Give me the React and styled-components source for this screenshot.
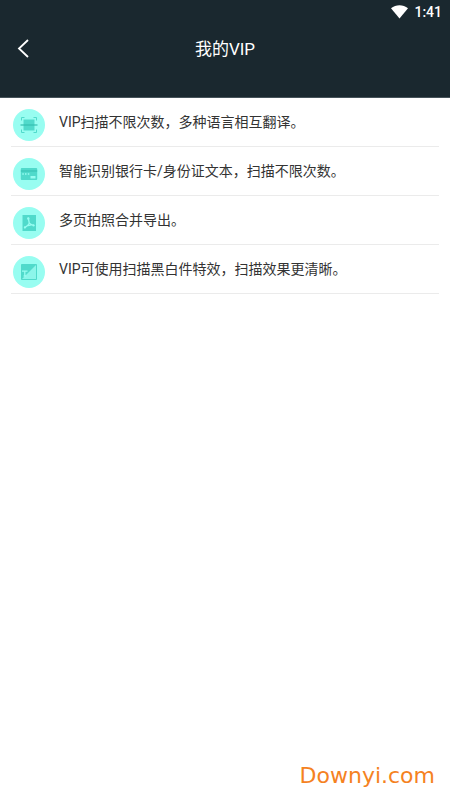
import React from 'react';
import styled, { createGlobalStyle } from 'styled-components';

const COLORS = {
  header: '#1a282f',
  circle: '#98fdf1',
  glyph: '#50dacb',
  glyphDark: '#35bfb1',
  text: '#333',
  line: '#ebebeb',
  brand: '#f5821f',
};

const GlobalStyle = createGlobalStyle`
  * {
    box-sizing: border-box;
  }
  body {
    margin: 0;
    background: #fff;
    font-family: Roboto, 'Noto Sans CJK SC', sans-serif;
  }
`;

const Page = styled.div`
  display: flex;
  flex-direction: column;
  min-height: 100vh;
`;

const Header = styled.header`
  background: ${COLORS.header};
  color: #fff;
  padding-bottom: 24px;
  border-bottom: 1px solid #46535a;
`;

const StatusBar = styled.div`
  display: flex;
  align-items: center;
  justify-content: flex-end;
  gap: 6px;
  height: 24px;
  padding-right: 8px;
`;

const Clock = styled.time`
  font-size: 14px;
  line-height: 24px;
  font-weight: 500;
`;

const TitleBar = styled.div`
  display: grid;
  grid-template-columns: 48px 1fr 48px;
  align-items: center;
  height: 49px;
`;

const BackButton = styled.button`
  display: flex;
  align-items: center;
  height: 48px;
  padding: 0 0 0 16px;
  border: 0;
  background: none;
  color: inherit;
  cursor: pointer;
`;

const Title = styled.h1`
  margin: 0;
  font-size: 17px;
  line-height: 24px;
  font-weight: 400;
  text-align: center;
`;

const List = styled.ul`
  flex: 1;
  margin: 0;
  padding: 0 11px;
  list-style: none;
`;

const Item = styled.li`
  display: flex;
  gap: 14px;
  height: 49px;
  padding: 11px 0 0 2px;
  border-bottom: 1px solid ${COLORS.line};
`;

const Circle = styled.span`
  display: flex;
  flex: none;
  align-items: center;
  justify-content: center;
  width: 32px;
  height: 32px;
  border-radius: 50%;
  background: ${COLORS.circle};
`;

const Label = styled.span`
  font-size: 14px;
  line-height: 26px;
  color: ${COLORS.text};
`;

const Footer = styled.footer`
  display: flex;
  justify-content: flex-end;
  padding: 0 15px 10px;
`;

const Brand = styled.a`
  font-family: 'DejaVu Sans', sans-serif;
  font-size: 22px;
  line-height: 28px;
  color: ${COLORS.brand};
  text-decoration: none;
`;

function Glyph({ children }) {
  return (
    <svg width="18" height="18" viewBox="0 0 18 18" fill="none" aria-hidden="true">
      {children}
    </svg>
  );
}

function ScanIcon() {
  return (
    <Glyph>
      <path d="M3.5 3.5h11v11h-11z" fill={COLORS.glyph} />
      <path
        d="M1.5 4.500V1.500h3M13.500 1.500h3v3M1.500 13.500v3h3M13.500 16.500h3v-3"
        stroke={COLORS.glyph}
      />
      <path d="M.5 9h17" stroke={COLORS.glyphDark} strokeWidth="1.2" />
    </Glyph>
  );
}

function CardIcon() {
  return (
    <Glyph>
      <path d="M1.800 3h14.400a1 1 0 0 1 1 1v10a1 1 0 0 1-1 1H1.800a1 1 0 0 1-1-1V4a1 1 0 0 1 1-1z" fill={COLORS.glyph} />
      <path d="M.8 6h16.400" stroke={COLORS.glyphDark} />
      <path d="M2.300 9h1.500M5 9h1.500M7.800 9h1.500" stroke={COLORS.circle} strokeWidth="1.600" />
      <path d="M10.500 11h5v2.500h-5z" fill={COLORS.circle} />
    </Glyph>
  );
}

function PdfIcon() {
  return (
    <Glyph>
      <path d="M2.500 1h13.500v16H2.500z" fill={COLORS.glyph} />
      <path
        d="M8.300 4.200C8.600 6 9 7.800 9.300 9.300M9.300 9.300C8.200 11.300 6.500 12.800 4.800 13.600M9.300 9.300C10.600 10.500 12 11.200 13.800 11.400M6.700 12Q9 11 11.500 10.800"
        stroke={COLORS.circle}
        strokeWidth="1.300"
        strokeLinecap="round"
      />
      <circle cx="8.300" cy="4.500" r="1.200" fill={COLORS.circle} />
      <circle cx="4.900" cy="13.400" r="1.100" fill={COLORS.circle} />
      <circle cx="13.500" cy="11.400" r="1.100" fill={COLORS.circle} />
    </Glyph>
  );
}

function ContrastIcon() {
  return (
    <Glyph>
      <path d="M1.500 1.500h15v15h-15z" fill="#8cf6ea" />
      <path d="M1.500 1.500h15l-15 15z" fill={COLORS.glyph} />
      <path d="M1.500 1.500h15v15h-15z" stroke={COLORS.glyph} />
      <path d="M2 8.200h5.500M4.800 8.200v5.300M3.600 13h2.600" stroke={COLORS.circle} strokeWidth="1.300" />
    </Glyph>
  );
}

const benefits = [
  { icon: ScanIcon, text: 'VIP扫描不限次数，多种语言相互翻译。' },
  { icon: CardIcon, text: '智能识别银行卡/身份证文本，扫描不限次数。' },
  { icon: PdfIcon, text: '多页拍照合并导出。' },
  { icon: ContrastIcon, text: 'VIP可使用扫描黑白件特效，扫描效果更清晰。' },
];

function App() {
  return (
    <>
      <GlobalStyle />
      <Page lang="zh-CN">
        <Header>
          <StatusBar>
            <svg width="17" height="14" viewBox="0 0 17 14" aria-hidden="true">
              <path d="M0 3.200C5-.9 12-.9 17 3.200L8.500 13.500z" fill="#fff" />
            </svg>
            <Clock>1:41</Clock>
          </StatusBar>
          <TitleBar>
            <BackButton type="button" aria-label="返回">
              <svg width="14" height="20" viewBox="0 0 14 20" fill="none">
                <path d="M12 1L3 9.500l9 8.500" stroke="currentColor" strokeWidth="1.800" />
              </svg>
            </BackButton>
            <Title>我的VIP</Title>
          </TitleBar>
        </Header>
        <List>
          {benefits.map(({ icon: Icon, text }) => (
            <Item key={text}>
              <Circle>
                <Icon />
              </Circle>
              <Label>{text}</Label>
            </Item>
          ))}
        </List>
        <Footer>
          <Brand href="#home">Downyi.com</Brand>
        </Footer>
      </Page>
    </>
  );
}

export default App;
